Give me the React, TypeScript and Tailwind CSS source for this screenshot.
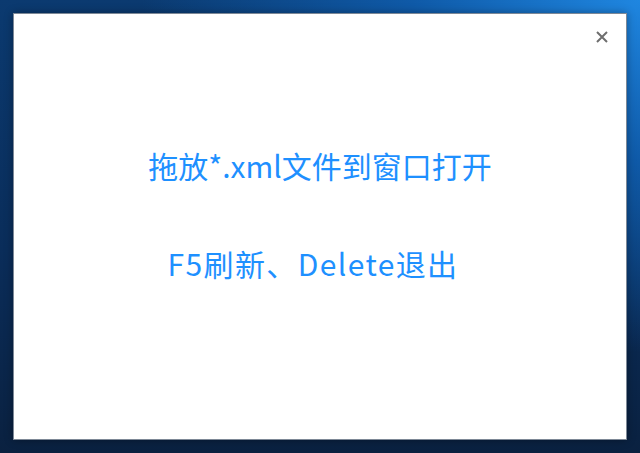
import React from 'react';

export default function App() {
  return (
    <div className="h-[453px] w-full overflow-hidden bg-[radial-gradient(ellipse_at_100%_0%,#1f86e0_0%,#0f5aa8_25%,transparent_55%),linear-gradient(to_bottom,#0b3a70_0%,#0a2d5a_55%,#0a2140_100%)] p-[13px]">
      <div className="relative h-full w-full border border-[#7d8896] bg-white shadow-[0_0_8px_rgba(0,0,0,0.35)]">
        <button className="absolute right-[18px] top-[16px] flex h-[13px] w-[13px] items-center justify-center">
          <svg width="12" height="12" viewBox="0 0 12 12">
            <path d="M1 1L11 11M11 1L1 11" stroke="#6e6e6e" strokeWidth="2" />
          </svg>
        </button>
        <div className="flex flex-col items-center pt-[133px] font-['Noto_Sans_CJK_SC',sans-serif] text-[30px] leading-[36px] text-[#1e90ff]">
          <div>拖放*.xml文件到窗口打开</div>
          <div className="mt-[62px] pr-[14px] tracking-[1.4px]">F5刷新、Delete退出</div>
        </div>
      </div>
    </div>
  );
}
